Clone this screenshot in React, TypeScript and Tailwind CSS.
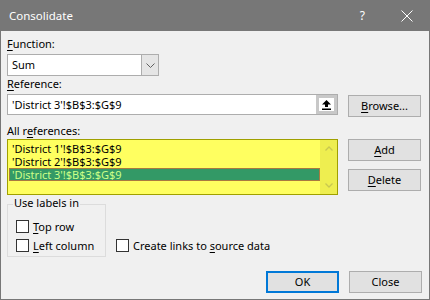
import React from "react";

const font = { fontFamily: '"Noto Sans", "Liberation Sans", sans-serif' };

function U({ children }: { children: React.ReactNode }) {
  return <span className="underline underline-offset-[2px] decoration-[1px]">{children}</span>;
}

function Btn({ children, primary }: { children: React.ReactNode; primary?: boolean }) {
  return (
    <div
      className={
        "w-[73px] h-[22px] flex items-center justify-center bg-[#e1e1e1] text-black leading-[16px] " +
        (primary ? "border-2 border-[#0078d7]" : "border border-[#adadad]")
      }
    >
      <span>{children}</span>
    </div>
  );
}

function Check({ label }: { label: React.ReactNode }) {
  return (
    <div className="flex items-center h-[13px]">
      <div className="w-[13px] h-[13px] bg-white border border-[#333333] shrink-0" />
      <span className="ml-[4px] leading-[13px] whitespace-nowrap">{label}</span>
    </div>
  );
}

export default function App() {
  return (
    <div className="w-[430px] h-[300px] flex flex-col bg-[#f0f0f0] text-[11px] text-black" style={font}>
      <div className="h-[31px] bg-[#777777] flex items-center text-white shrink-0">
        <span className="ml-[9px] text-[11.5px]">Consolidate</span>
        <span className="ml-auto mr-[36px] text-[12px]">?</span>
        <svg width="12" height="12" viewBox="0 0 12 12" className="mr-[17px]">
          <path d="M0.5 0.5 L11.5 11.5 M11.5 0.5 L0.5 11.5" stroke="white" strokeWidth="1" />
        </svg>
      </div>
      <div className="flex-1 flex flex-col border-x border-b border-[#777777] pl-[6px] pr-[7px]">
        <div className="h-[16px] leading-[16px] mt-[5px]">
          <U>F</U>unction:
        </div>
        <div className="mt-[2px] w-[152px] h-[22px] flex border border-[#adadad] bg-white">
          <div className="flex-1 pl-[4px] leading-[20px]">Sum</div>
          <div className="w-[17px] bg-[#e5e5e5] border-l border-[#adadad] flex items-center justify-center">
            <svg width="9" height="5" viewBox="0 0 9 5">
              <path d="M0.5 0.5 L4.5 4.5 L8.5 0.5" stroke="#606060" strokeWidth="1" fill="none" />
            </svg>
          </div>
        </div>
        <div className="h-[16px] leading-[16px]">
          <U>R</U>eference:
        </div>
        <div className="mt-[2px] flex items-start">
          <div className="w-[331px] h-[21px] flex border border-[#adadad] bg-white">
            <div className="flex-1 pl-[4px] leading-[19px]">'District 3'!$B$3:$G$9</div>
            <div className="w-[21px] h-[19px] border-[3px] border-[#c8c8c8] bg-white flex items-center justify-center">
              <svg width="9" height="10" viewBox="0 0 9 10">
                <path d="M4.5 0 L9 4.5 L6 4.5 L6 7 L3 7 L3 4.5 L0 4.5 Z" fill="black" />
                <rect x="0" y="8.5" width="9" height="1.5" fill="black" />
              </svg>
            </div>
          </div>
          <div className="ml-[10px] mt-[1px]">
            <Btn>
              <U>B</U>rowse...
            </Btn>
          </div>
        </div>
        <div className="h-[16px] leading-[16px] mt-[6px]">
          All r<U>e</U>ferences:
        </div>
        <div className="flex items-start">
          <div className="w-[331px] h-[56px] flex border border-[#a0a000] bg-[#ffff60]">
            <div className="flex-1 pt-[2px] pl-[1px]">
              <div className="h-[13px] leading-[13px] pl-[3px]">'District 1'!$B$3:$G$9</div>
              <div className="h-[13px] leading-[13px] pl-[3px]">'District 2'!$B$3:$G$9</div>
              <div className="h-[13px] leading-[11px] pl-[2px] bg-[#339966] border border-[#a87a40] text-[#ccff88]">
                'District 3'!$B$3:$G$9
              </div>
            </div>
            <div className="w-[17px] bg-[#eeee50] flex flex-col items-center justify-between py-[6px]">
              <svg width="8" height="5" viewBox="0 0 8 5">
                <path d="M0.5 4.5 L4 1 L7.5 4.5" stroke="#c8c850" strokeWidth="1.3" fill="none" />
              </svg>
              <svg width="8" height="5" viewBox="0 0 8 5">
                <path d="M0.5 0.5 L4 4 L7.5 0.5" stroke="#c8c850" strokeWidth="1.3" fill="none" />
              </svg>
            </div>
          </div>
          <div className="ml-[10px] flex flex-col gap-[8px]">
            <Btn>
              <U>A</U>dd
            </Btn>
            <Btn>
              <U>D</U>elete
            </Btn>
          </div>
        </div>
        <div className="flex items-start mt-[9px]">
          <div className="relative w-[99px] h-[53px] border border-[#dcdcdc]">
            <span className="absolute left-[5px] top-[-10px] bg-[#f0f0f0] px-[1px] leading-[16px] whitespace-nowrap">Use labels in</span>
            <div className="flex flex-col gap-[6px] pl-[8px] pt-[15px]">
              <Check label={<><U>T</U>op row</>} />
              <Check label={<><U>L</U>eft column</>} />
            </div>
          </div>
          <div className="ml-[10px] mt-[35px]">
            <Check label={<>Create links to <U>s</U>ource data</>} />
          </div>
        </div>
        <div className="flex justify-end gap-[10px] mt-[14px]">
          <Btn primary>OK</Btn>
          <Btn>Close</Btn>
        </div>
      </div>
    </div>
  );
}
